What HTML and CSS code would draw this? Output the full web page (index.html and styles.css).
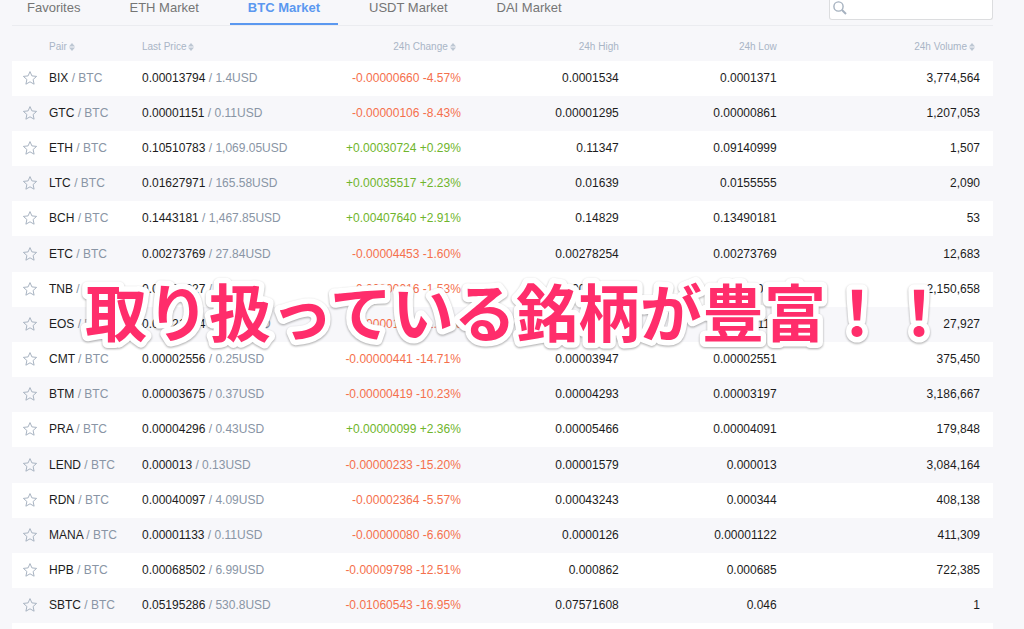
FILE: index.html
```html
<!DOCTYPE html>
<html lang="en">
<head>
<meta charset="utf-8">
<title>BTC Market</title>
<link rel="stylesheet" href="styles.css">
</head>
<body>
<svg class="defs" aria-hidden="true">
  <symbol id="star" viewBox="0 0 16 16"><path d="M8 1.6 9.9 5.9 14.6 6.4 11.1 9.5 12.1 14.2 8 11.8 3.9 14.2 4.9 9.5 1.4 6.4 6.1 5.9Z"/></symbol>
  <symbol id="sort" viewBox="0 0 6 8"><path d="M3 0 6 3.4H0ZM0 4.6H6L3 8Z"/></symbol>
</svg>
<main class="market">
  <div class="bar">
    <nav class="tabs" aria-label="Markets">
      <a class="tab" href="#favorites">Favorites</a>
      <a class="tab" href="#eth">ETH Market</a>
      <a class="tab tab-active" href="#btc" aria-current="page">BTC Market</a>
      <a class="tab" href="#usdt">USDT Market</a>
      <a class="tab" href="#dai">DAI Market</a>
    </nav>
    <label class="search">
      <svg class="search-icon" viewBox="0 0 14 14" aria-hidden="true"><circle cx="5.5" cy="5.5" r="4.6"/><path d="M9 9 13 13"/></svg>
      <input class="search-input" type="text" aria-label="Search pair">
    </label>
  </div>
  <table class="pairs">
    <colgroup>
      <col class="col-star"><col class="col-pair"><col class="col-price"><col class="col-change"><col class="col-range"><col class="col-range"><col>
    </colgroup>
    <thead>
      <tr>
        <td></td>
        <th class="left" scope="col"><button class="sort" type="button">Pair<svg class="arrows" aria-hidden="true"><use href="#sort"/></svg></button></th>
        <th class="left" scope="col"><button class="sort" type="button">Last Price<svg class="arrows" aria-hidden="true"><use href="#sort"/></svg></button></th>
        <th scope="col"><button class="sort sort-end" type="button">24h Change<svg class="arrows" aria-hidden="true"><use href="#sort"/></svg></button></th>
        <th scope="col">24h High</th>
        <th scope="col">24h Low</th>
        <th class="volume" scope="col"><button class="sort sort-end" type="button">24h Volume<svg class="arrows" aria-hidden="true"><use href="#sort"/></svg></button></th>
      </tr>
    </thead>
    <tbody id="rows"></tbody>
  </table>
  <svg class="caption" lang="ja"><text x="10" y="64">取り扱っている銘柄が豊富！！</text></svg>
</main>
<script src="market.js"></script>
</body>
</html>
```
FILE: styles.css
```css
* { box-sizing: border-box; }

body {
  margin: 0;
  height: 100vh;
  overflow: hidden;
  background: #f7f7fa;
  color: #1c1c1c;
  font-family: "Liberation Sans", Arial, sans-serif;
  font-size: 12px;
}

.defs { display: none; }

.market {
  position: relative;
  margin: 0 31px 0 12px;
}

.bar {
  display: flex;
  justify-content: space-between;
  align-items: flex-start;
  height: 26px;
  border-bottom: 1px solid #ebecf0;
}

.tabs {
  display: flex;
  gap: 13px;
}

.tab {
  height: 25px;
  padding: 0 18px;
  border-bottom: 2px solid transparent;
  color: #757575;
  font-size: 13px;
  line-height: 16px;
  text-decoration: none;
  white-space: nowrap;
}

.tab:first-child { padding-left: 15px; }

.tab.tab-active {
  border-color: #5b98f0;
  color: #5b98f0;
  font-weight: bold;
}

.search {
  display: flex;
  align-items: flex-start;
  width: 164px;
  height: 20px;
  padding: 1px 3px;
  background: #fff;
  border: 1px solid #dcdddf;
  border-top: 0;
  border-radius: 0 0 3px 3px;
}

.search-icon {
  flex: none;
  width: 14px;
  height: 14px;
  fill: none;
  stroke: #a5b1bf;
  stroke-width: 1.4;
}

.search-icon path { stroke-width: 2; }

.search-input {
  flex: 1;
  min-width: 0;
  height: 16px;
  padding: 0 4px;
  border: 0;
  outline: 0;
  background: transparent;
  font: inherit;
}

.pairs {
  width: 100%;
  table-layout: fixed;
  border-collapse: collapse;
}

.col-star { width: 37px; }
.col-pair { width: 93px; }
.col-price { width: 20%; }
.col-change { width: 12.5%; }
.col-range { width: 16.1%; }

.pairs th,
.pairs td {
  height: 35px;
  padding: 0 0 1px;
  text-align: right;
  white-space: nowrap;
}

.pairs th {
  padding: 6px 0 0;
  color: #a9b5c6;
  font-size: 10px;
  font-weight: normal;
}

.pairs .left { text-align: left; }
.pairs .volume { padding-right: 13px; }
.pairs .star-cell { padding-left: 10px; text-align: left; }

.pairs tbody tr:nth-child(odd) { background: #fff; }
.pairs tbody tr:nth-child(6n) td { height: 36px; }

.sort,
.star {
  padding: 0;
  border: 0;
  background: none;
  color: inherit;
  font: inherit;
}

.pairs .sort-end { padding-right: 5px; }

.arrows {
  width: 6px;
  height: 8px;
  margin-left: 2px;
  fill: #bdc7d3;
  vertical-align: -1px;
}

.star { display: block; }

.star svg {
  display: block;
  width: 16px;
  height: 16px;
  fill: none;
  stroke: #a9b4c2;
  stroke-width: 1;
}

.muted { color: #8995a5; }
.up { color: #6fb52c; }
.down { color: #f5704c; }

.caption {
  position: absolute;
  top: 273px;
  left: 63px;
  width: 890px;
  height: 84px;
  overflow: visible;
  fill: #ff2d6b;
  stroke: #fff;
  stroke-width: 11px;
  stroke-linejoin: round;
  paint-order: stroke fill;
  font-family: "Noto Sans CJK JP", sans-serif;
  font-size: 62px;
  font-weight: bold;
  filter: drop-shadow(0 1px 1px rgba(0, 0, 0, 0.35));
  pointer-events: none;
}
```
FILE: market.js
```js
const pairs = [
  ["BIX", "0.00013794", "1.4", "-0.00000660 -4.57%", "0.0001534", "0.0001371", "3,774,564"],
  ["GTC", "0.00001151", "0.11", "-0.00000106 -8.43%", "0.00001295", "0.00000861", "1,207,053"],
  ["ETH", "0.10510783", "1,069.05", "+0.00030724 +0.29%", "0.11347", "0.09140999", "1,507"],
  ["LTC", "0.01627971", "165.58", "+0.00035517 +2.23%", "0.01639", "0.0155555", "2,090"],
  ["BCH", "0.1443181", "1,467.85", "+0.00407640 +2.91%", "0.14829", "0.13490181", "53"],
  ["ETC", "0.00273769", "27.84", "-0.00004453 -1.60%", "0.00278254", "0.00273769", "12,683"],
  ["TNB", "0.00000327", "0.03", "-0.00000016 -1.53%", "0.0000034", "0.000003", "2,150,658"],
  ["EOS", "0.00121234", "12.33", "-0.00001956 -1.56%", "0.00127", "0.00115", "27,927"],
  ["CMT", "0.00002556", "0.25", "-0.00000441 -14.71%", "0.00003947", "0.00002551", "375,450"],
  ["BTM", "0.00003675", "0.37", "-0.00000419 -10.23%", "0.00004293", "0.00003197", "3,186,667"],
  ["PRA", "0.00004296", "0.43", "+0.00000099 +2.36%", "0.00005466", "0.00004091", "179,848"],
  ["LEND", "0.000013", "0.13", "-0.00000233 -15.20%", "0.00001579", "0.000013", "3,084,164"],
  ["RDN", "0.00040097", "4.09", "-0.00002364 -5.57%", "0.00043243", "0.000344", "408,138"],
  ["MANA", "0.00001133", "0.11", "-0.00000080 -6.60%", "0.0000126", "0.00001122", "411,309"],
  ["HPB", "0.00068502", "6.99", "-0.00009798 -12.51%", "0.000862", "0.000685", "722,385"],
  ["SBTC", "0.05195286", "530.8", "-0.01060543 -16.95%", "0.07571608", "0.046", "1"]
];

const rows = pairs.map(([coin, price, usd, change, high, low, volume]) => `
  <tr>
    <td class="star-cell"><button class="star" type="button" aria-label="Favorite ${coin}"><svg aria-hidden="true"><use href="#star"/></svg></button></td>
    <td class="left">${coin} <span class="muted">/ BTC</span></td>
    <td class="left">${price} <span class="muted">/ ${usd}USD</span></td>
    <td class="${change[0] === "+" ? "up" : "down"}">${change}</td>
    <td>${high}</td>
    <td>${low}</td>
    <td class="volume">${volume}</td>
  </tr>`);

rows.push('<tr><td colspan="7"></td></tr>');
document.getElementById("rows").innerHTML = rows.join("");
```
